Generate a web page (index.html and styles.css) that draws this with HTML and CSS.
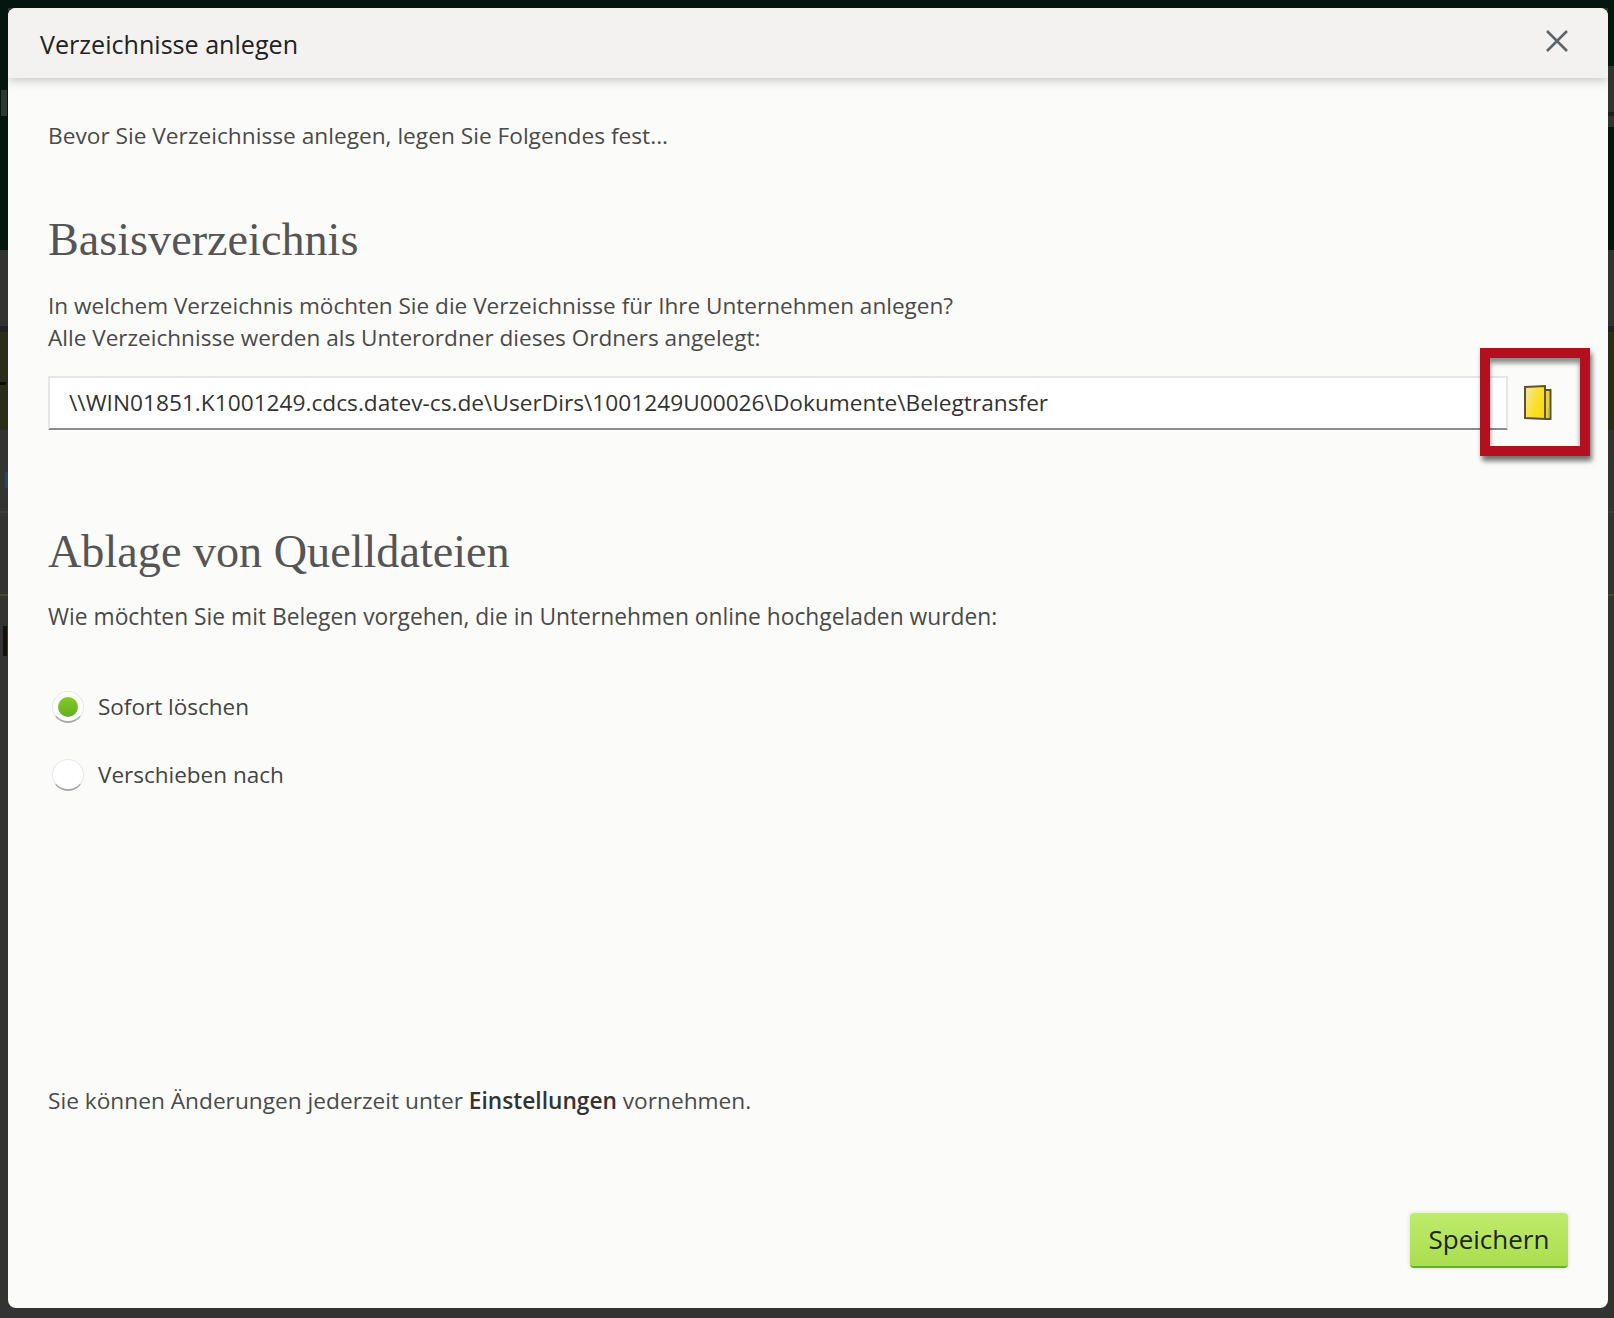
FILE: index.html
```html
<!DOCTYPE html>
<html lang="de">
<head>
<meta charset="utf-8">
<title>Verzeichnisse anlegen</title>
<link rel="stylesheet" href="styles.css">
</head>
<body>
<div class="backdrop">
  <section class="dialog">
    <header class="dialog-head">
      <h1 class="dialog-title">Verzeichnisse anlegen</h1>
      <svg class="close" width="22" height="22" viewBox="0 0 22 22"><path d="M1 1L21 21M21 1L1 21" stroke="#5f6468" stroke-width="2.6" fill="none"/></svg>
    </header>
    <div class="dialog-body">
      <p class="intro">Bevor Sie Verzeichnisse anlegen, legen Sie Folgendes fest...</p>
      <h2 class="heading first">Basisverzeichnis</h2>
      <p class="text base-text">In welchem Verzeichnis möchten Sie die Verzeichnisse für Ihre Unternehmen anlegen?<br>Alle Verzeichnisse werden als Unterordner dieses Ordners angelegt:</p>
      <div class="path-row">
        <div class="path-input">\\WIN01851.K1001249.cdcs.datev-cs.de\UserDirs\1001249U00026\Dokumente\Belegtransfer</div>
        <div class="folder-btn">
          <svg width="28" height="36" viewBox="0 0 28 36">
            <defs><linearGradient id="fg" x1="0" y1="0" x2="1" y2="0.7"><stop offset="0" stop-color="#efe6b4"/><stop offset="0.6" stop-color="#fde02a"/><stop offset="1" stop-color="#fbd80f"/></linearGradient></defs>
            <path d="M21 5H26.5V34H21Z" fill="#e9cf3a" stroke="#5f5230" stroke-width="2"/>
            <path d="M24.5 23H26V32H24.5Z" fill="#84b83a"/>
            <path d="M1 2L21 1V34L1 33Z" fill="url(#fg)" stroke="#5f5230" stroke-width="2"/>
          </svg>
        </div>
        <div class="highlight"></div>
      </div>
      <h2 class="heading second">Ablage von Quelldateien</h2>
      <p class="text source-text">Wie möchten Sie mit Belegen vorgehen, die in Unternehmen online hochgeladen wurden:</p>
      <div class="radio-group">
        <label class="radio-row"><span class="radio checked"></span><span class="radio-label">Sofort löschen</span></label>
        <label class="radio-row"><span class="radio"></span><span class="radio-label">Verschieben nach</span></label>
      </div>
      <p class="note">Sie können Änderungen jederzeit unter <b>Einstellungen</b> vornehmen.</p>
      <div class="actions"><button class="save">Speichern</button></div>
    </div>
  </section>
</div>
</body>
</html>
```
FILE: styles.css
```css
* { box-sizing: border-box; }
html, body { margin: 0; padding: 0; height: 100%; }
body { font-family: "Open Sans", "Liberation Sans", sans-serif; color: #4a4a4a; overflow: hidden; }
.backdrop {
  width: 1614px; height: 1318px; padding: 8px 6px 10px 8px;
  background-color: #333;
  background-image:
    linear-gradient(#2b3833, #2b3833),
    linear-gradient(#0c0c0c, #0c0c0c),
    linear-gradient(#2a4468, #2a4468),
    linear-gradient(#14110a, #14110a),
    linear-gradient(#04160f 0, #04160f 250px, #333 250px, #333 326px, #222 326px, #222 332px, #2a2e18 332px, #2a2e18 430px, #333 430px, #333 511px, #3c3c3c 511px, #3c3c3c 513px, #333 513px, #333 594px, #454f22 594px, #454f22 596px, #333 596px),
    linear-gradient(#04160f 0, #04160f 66px, #333 66px, #333 112px, #1e1e1e 112px, #1e1e1e 116px, #333 116px, #333 127px, #04160f 127px, #04160f 250px, #333 250px, #333 326px, #222 326px, #222 332px, #2a2e18 332px, #2a2e18 430px, #333 430px, #333 511px, #3c3c3c 511px, #3c3c3c 513px, #333 513px, #333 594px, #454f22 594px, #454f22 596px, #333 596px),
    linear-gradient(#04160f, #04160f);
  background-size: 6px 26px, 6px 3px, 3px 16px, 4px 30px, 8px 100%, 6px 100%, 100% 8px;
  background-position: 1px 90px, 0 382px, 5px 472px, 3px 626px, left top, right top, left top;
  background-repeat: no-repeat;
}
.dialog { height: 1300px; background: #fbfbf9; border-radius: 8px; display: flex; flex-direction: column; overflow: hidden; }
.dialog-head {
  height: 70px; flex: none; background: #f3f2f0; display: flex; align-items: center; justify-content: space-between;
  padding: 0 40px 0 32px; box-shadow: 0 3px 9px rgba(0,0,0,.2); position: relative;
}
.dialog-title { margin: 1px 0 0; font-size: 25.1px; font-weight: 400; color: #222; }
.close { display: block; margin-top: -5px; }
.dialog-body { flex: 1; padding: 0 42px 0 40px; display: flex; flex-direction: column; }
.intro { margin: 43px 0 0; font-size: 22.7px; line-height: 30px; }
.heading { margin: 0; font-family: "Liberation Serif", serif; font-weight: 400; font-size: 46.2px; line-height: 50px; color: #555; }
.heading.first { margin-top: 64px; }
.heading.second { margin-top: 97px; }
.text { margin: 0; line-height: 32px; }
.base-text { margin-top: 25px; font-size: 22.57px; }
.source-text { margin-top: 24px; font-size: 22.8px; }
.path-row { position: relative; display: flex; margin-top: 22px; height: 54px; }
.path-input {
  flex: none; width: 1460px; height: 54px; background: #fff; border: 2px solid #e6e6e4; border-bottom-color: #8c8c8c;
  font-size: 22.7px; line-height: 50px; padding: 0 19px; color: #333; white-space: nowrap;
}
.folder-btn { flex: none; width: 58px; padding-left: 16px; display: flex; align-items: center; }
.highlight {
  position: absolute; left: 1432px; top: -28px; width: 110px; height: 108px; border: 10px solid #b40f1e;
  box-shadow: 2px 5px 5px rgba(0,0,0,.55), inset 0 5px 5px rgba(0,0,0,.45);
}
.radio-group { margin-top: 58px; display: flex; flex-direction: column; gap: 36px; }
.radio-row { display: flex; align-items: center; gap: 14px; font-size: 22.5px; line-height: 32px; color: #444; }
.radio {
  width: 32px; height: 32px; border-radius: 50%; background: #fff; margin-left: 4px; flex: none;
  border: 1px solid #e8e8e8; border-bottom: 2px solid #aaa; display: flex; align-items: center; justify-content: center;
}
.radio.checked::after { content: ""; width: 20px; height: 20px; border-radius: 50%; background: linear-gradient(#84c92c, #63b01c); }
.note { margin: auto 0 0; font-size: 22.7px; line-height: 32px; }
.note b { font-weight: 600; color: #333; }
.actions { display: flex; justify-content: flex-end; margin: 96px -2px 40px 0; }
.save {
  width: 158px; height: 55px; border: 0; border-bottom: 2px solid #62b22a; border-radius: 4px;
  background: linear-gradient(#bfeb6c, #a9de4e); font: 400 26px "Open Sans", sans-serif; color: #222; padding: 0 0 2px;
  box-shadow: 0 0 4px rgba(0,0,0,.15);
}
```
